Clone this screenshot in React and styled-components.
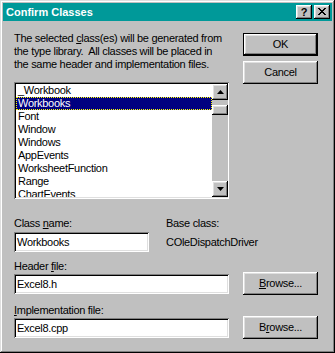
import React from 'react';
import styled, { createGlobalStyle } from 'styled-components';

const GlobalStyle = createGlobalStyle`
  html, body {
    margin: 0;
    padding: 0;
    background: #c0c0c0;
  }
  body {
    font-family: "Liberation Sans", Arial, sans-serif;
    font-size: 11px;
    letter-spacing: -0.3px;
    color: #000;
  }
  u {
    text-underline-offset: 1px;
  }
`;

const raised = `
  box-shadow: inset -1px -1px #000, inset 1px 1px #fff,
    inset -2px -2px #808080, inset 2px 2px #dfdfdf;
`;

const sunken = `
  box-shadow: inset 1px 1px #808080, inset -1px -1px #fff,
    inset 2px 2px #000, inset -2px -2px #dfdfdf;
`;

const Window = styled.div`
  width: 335px;
  height: 353px;
  box-sizing: border-box;
  padding: 3px;
  background: #c0c0c0;
  box-shadow: inset -1px -1px #000, inset 1px 1px #dfdfdf,
    inset -2px -2px #808080, inset 2px 2px #fff;
  display: flex;
  flex-direction: column;
`;

const TitleBar = styled.div`
  height: 18px;
  background: #009999;
  display: flex;
  align-items: center;
  padding: 0 2px 0 3px;
`;

const Title = styled.div`
  flex: 1;
  color: #fff;
  font-weight: bold;
  font-size: 11px;
  letter-spacing: 0;
  line-height: 18px;
`;

const TitleButtons = styled.div`
  display: flex;
  gap: 2px;
`;

const TitleButton = styled.div`
  width: 16px;
  height: 14px;
  background: #c0c0c0;
  ${raised}
  display: flex;
  align-items: center;
  justify-content: center;
  font-weight: bold;
  font-size: 11px;
  letter-spacing: 0;
  line-height: 14px;
  padding-bottom: 1px;
  box-sizing: border-box;
`;

const Body = styled.div`
  padding: 12px 14px 0 11px;
`;

const TopGrid = styled.div`
  display: grid;
  grid-template-columns: 215px 75px;
  column-gap: 14px;
`;

const Intro = styled.p`
  margin: -1px 0 0;
  line-height: 13px;
  white-space: nowrap;
`;

const ButtonColumn = styled.div`
  display: flex;
  flex-direction: column;
  gap: 5px;
`;

const Button = styled.div`
  width: 75px;
  height: 23px;
  box-sizing: border-box;
  background: #c0c0c0;
  display: flex;
  align-items: center;
  justify-content: center;
  line-height: 13px;
  ${({ $default }) =>
    $default
      ? `box-shadow: inset 0 0 0 1px #000, inset -2px -2px #000, inset 2px 2px #fff,
    inset -3px -3px #808080, inset 3px 3px #dfdfdf;`
      : raised}
`;

const ListBox = styled.div`
  margin-top: 11px;
  height: 117px;
  box-sizing: border-box;
  padding: 2px 1px 2px 2px;
  background: #fff;
  ${sunken}
  display: flex;
  overflow: hidden;
`;

const Items = styled.div`
  flex: 1;
  overflow: hidden;
`;

const Item = styled.div`
  height: 13px;
  line-height: 13px;
  padding-left: 2px;
  white-space: nowrap;
  box-sizing: border-box;
  ${({ $selected }) =>
    $selected &&
    `
    background: #000080;
    color: #fff;
    outline: 1px dotted #ffff00;
    outline-offset: -1px;
  `}
`;

const ScrollBar = styled.div`
  width: 16px;
  display: flex;
  flex-direction: column;
`;

const ScrollButton = styled.div`
  width: 16px;
  height: 16px;
  background: #c0c0c0;
  ${raised}
  display: flex;
  align-items: center;
  justify-content: center;
`;

const Track = styled.div`
  flex: 1;
  background: #c0c0c0;
  display: flex;
  flex-direction: column;
`;

const Thumb = styled.div`
  width: 16px;
  height: 10px;
  background: #c0c0c0;
  ${raised}
`;

const Fields = styled.div`
  margin-top: 18px;
  display: flex;
  flex-direction: column;
`;

const ClassGrid = styled.div`
  display: grid;
  grid-template-columns: 152px 1fr;
  row-gap: 2px;
  align-items: center;
`;

const Label = styled.div`
  line-height: ${({ $lh }) => $lh || 13}px;
  margin-top: ${({ $mt }) => $mt || 0}px;
  white-space: nowrap;
`;

const Edit = styled.div`
  width: ${({ $w }) => $w}px;
  height: 20px;
  box-sizing: border-box;
  background: #fff;
  ${sunken}
  padding: 0 3px;
  line-height: 20px;
  white-space: nowrap;
`;

const FileRow = styled.div`
  display: flex;
  align-items: center;
  gap: 14px;
  height: 23px;
`;

const Arrow = ({ up }) => (
  <svg width="7" height="4" viewBox="0 0 7 4">
    <polygon points={up ? '3.5,0 7,4 0,4' : '0,0 7,0 3.5,4'} fill="#000" />
  </svg>
);

const CloseGlyph = () => (
  <svg width="8" height="7" viewBox="0 0 8 7" shapeRendering="crispEdges">
    <path d="M0 0h2v1h-2zM6 0h2v1h-2zM1 1h2v1h-2zM5 1h2v1h-2zM2 2h4v1h-4zM3 3h2v1h-2zM2 4h4v1h-4zM1 5h2v1h-2zM5 5h2v1h-2zM0 6h2v1h-2zM6 6h2v1h-2z" fill="#000" />
  </svg>
);

const classes = [
  '_Workbook',
  'Workbooks',
  'Font',
  'Window',
  'Windows',
  'AppEvents',
  'WorksheetFunction',
  'Range',
  'ChartEvents',
];

export default function App() {
  return (
    <>
      <GlobalStyle />
      <Window>
        <TitleBar>
          <Title>Confirm Classes</Title>
          <TitleButtons>
            <TitleButton>?</TitleButton>
            <TitleButton>
              <CloseGlyph />
            </TitleButton>
          </TitleButtons>
        </TitleBar>
        <Body>
          <TopGrid>
            <div>
              <Intro>
                The selected <u>c</u>lass(es) will be generated from
                <br />
                the type library.&nbsp; All classes will be placed in
                <br />
                the same header and implementation files.
              </Intro>
              <ListBox>
                <Items>
                  {classes.map((c) => (
                    <Item key={c} $selected={c === 'Workbooks'}>
                      {c}
                    </Item>
                  ))}
                </Items>
                <ScrollBar>
                  <ScrollButton>
                    <Arrow up />
                  </ScrollButton>
                  <Track>
                    <Thumb style={{ marginTop: 5 }} />
                  </Track>
                  <ScrollButton>
                    <Arrow />
                  </ScrollButton>
                </ScrollBar>
              </ListBox>
            </div>
            <ButtonColumn>
              <Button $default>OK</Button>
              <Button>Cancel</Button>
            </ButtonColumn>
          </TopGrid>
          <Fields>
            <ClassGrid>
              <Label>
                Class <u>n</u>ame:
              </Label>
              <Label>Base class:</Label>
              <Edit $w={135}>Workbooks</Edit>
              <Label>COleDispatchDriver</Label>
            </ClassGrid>
            <Label $mt={8} $lh={12}>
              Header <u>f</u>ile:
            </Label>
            <FileRow>
              <Edit $w={215}>Excel8.h</Edit>
              <Button>
                <span>
                  <u>B</u>rowse...
                </span>
              </Button>
            </FileRow>
            <Label $mt={9} $lh={12}>
              <u>I</u>mplementation file:
            </Label>
            <FileRow>
              <Edit $w={215}>Excel8.cpp</Edit>
              <Button>
                <span>
                  B<u>r</u>owse...
                </span>
              </Button>
            </FileRow>
          </Fields>
        </Body>
      </Window>
    </>
  );
}
